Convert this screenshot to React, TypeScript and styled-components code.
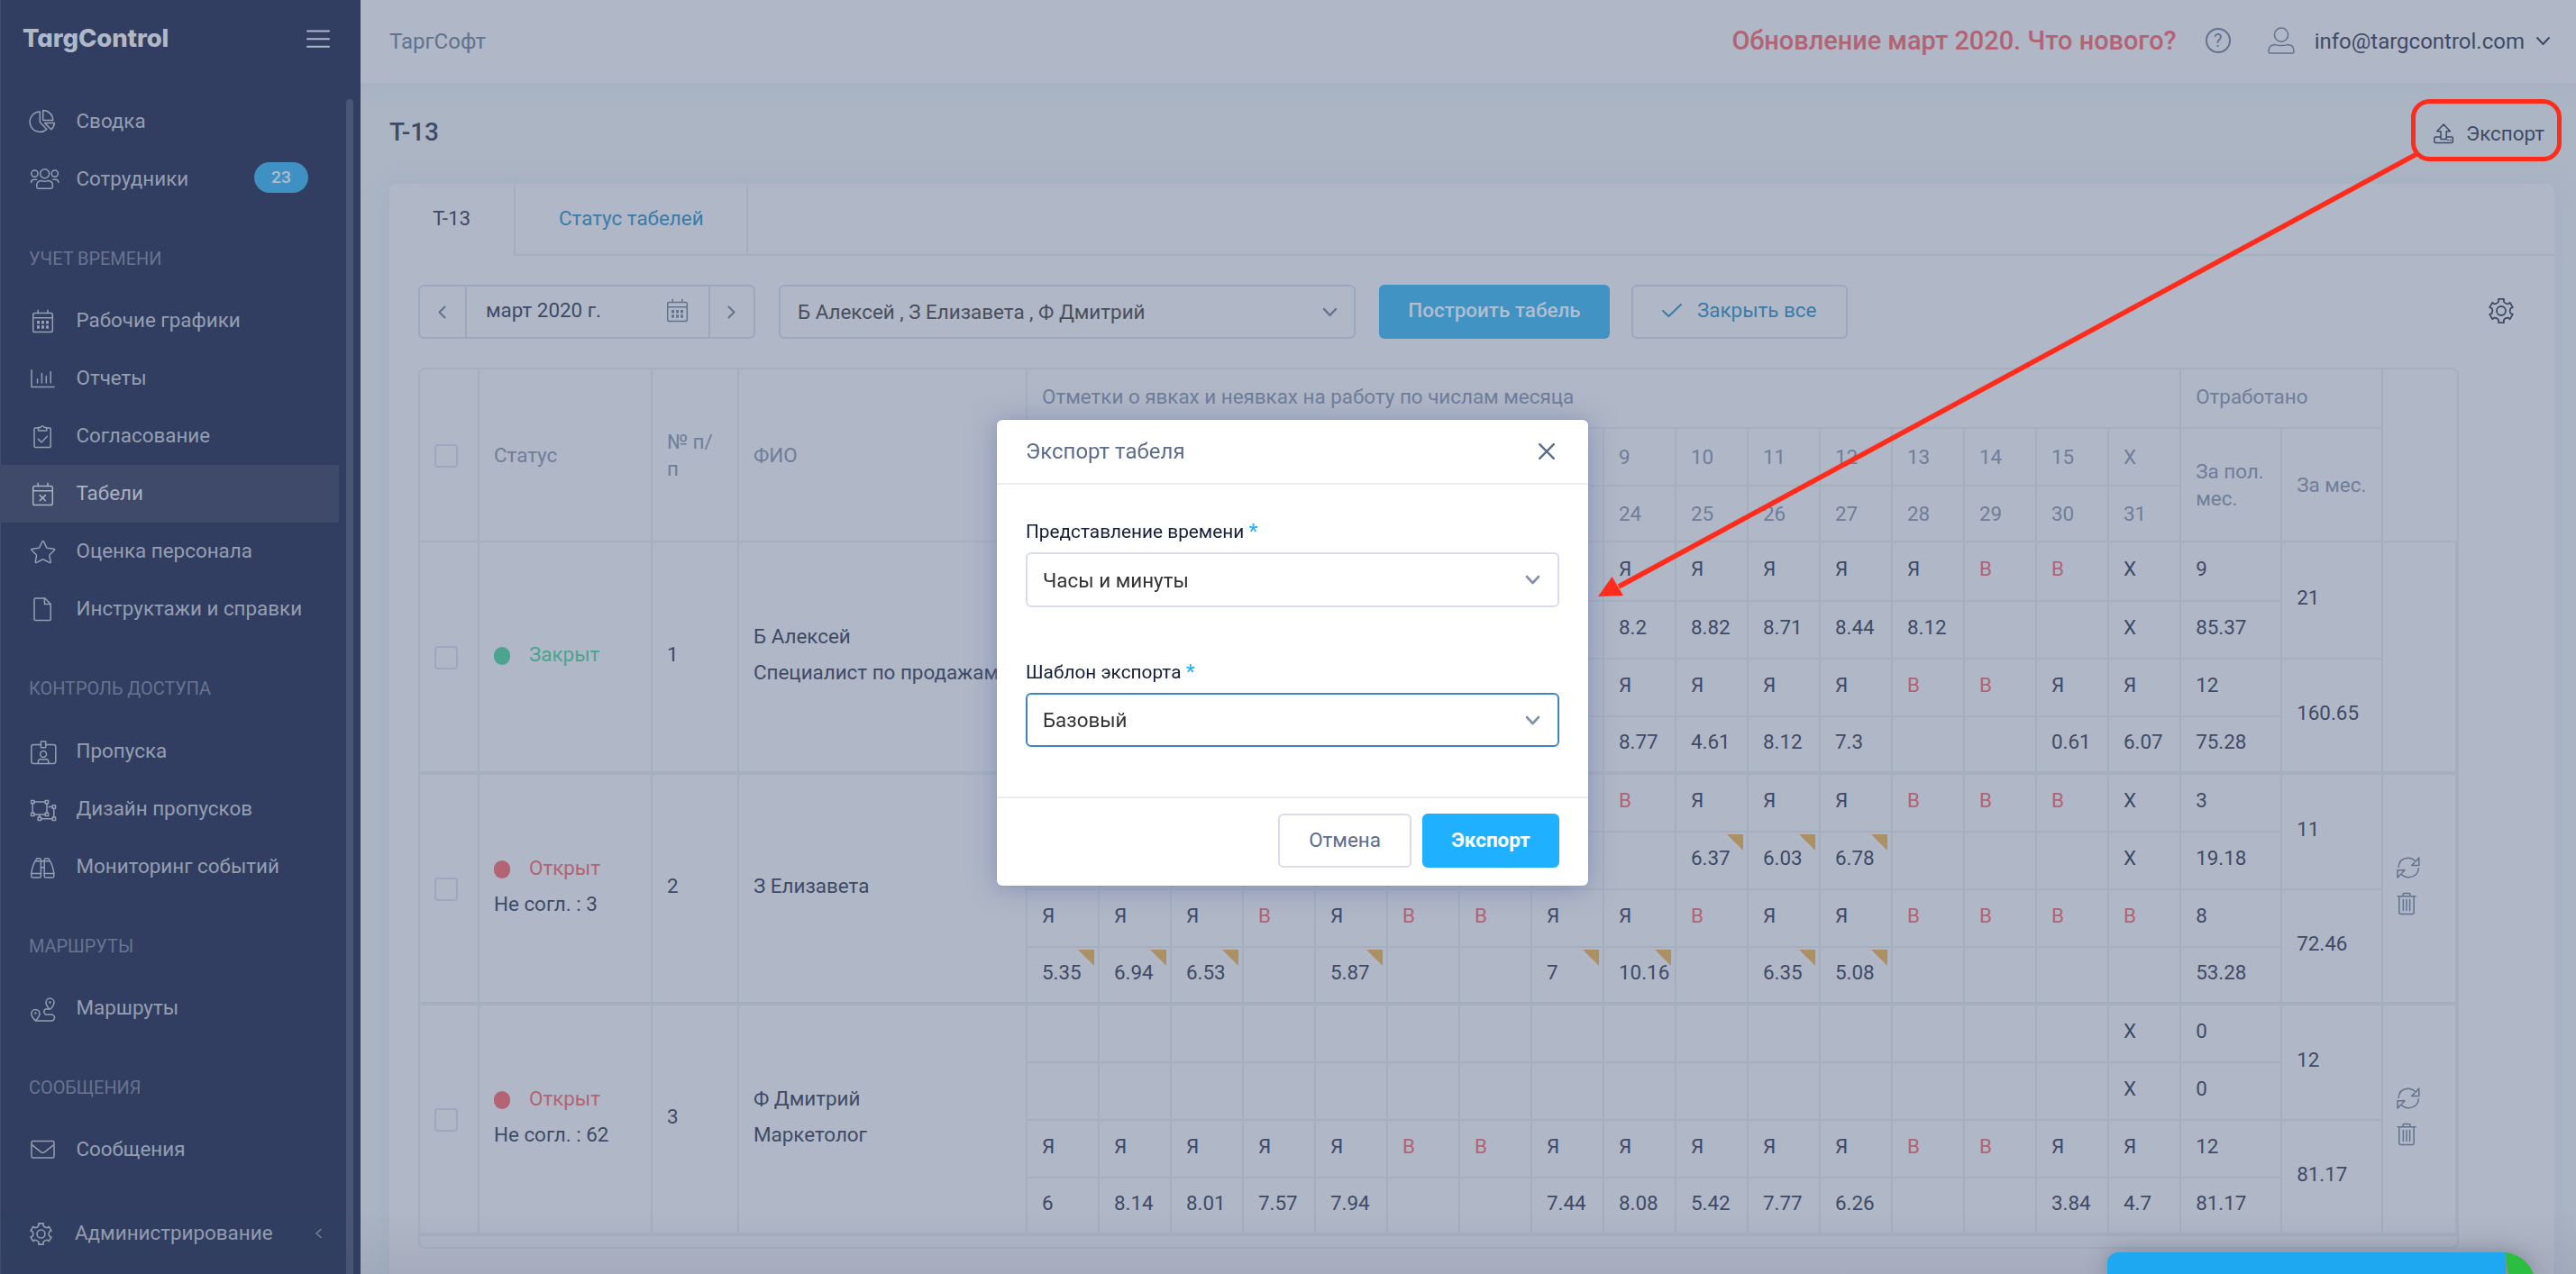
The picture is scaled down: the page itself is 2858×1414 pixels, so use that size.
import React from "react";
import styled, { createGlobalStyle, css } from "styled-components";

const colors = {
  page: "#abb5c4",
  card: "#b0b7c6",
  line: "#a5b0bf",
  control: "#9ba8bf",
  text: "#3f4b66",
  muted: "#6f7e9a",
  subtle: "#62738f",
  link: "#3a7ca8",
  danger: "#b26475",
  success: "#4ba48f",
  warning: "#ac9064",
  sidebar: "#313e61",
  sidebarActive: "#3f4969",
  sidebarText: "#959eb1",
  sidebarMuted: "#68748f",
  primary: "#1fb1ff",
  marker: "#ff2c1c",
};

const GlobalStyle = createGlobalStyle`
  * {
    box-sizing: border-box;
  }

  body {
    margin: 0;
    overflow: hidden;
    background: ${colors.page};
    color: ${colors.text};
    font-family: Roboto, "Liberation Sans", sans-serif;
    font-size: 22.4px;
    line-height: 30px;
  }
`;

/* ---------- icons ---------- */

const Svg = styled.svg`
  display: block;
  flex: none;
  fill: none;
  stroke: currentColor;
  stroke-width: 1.5;
  stroke-linejoin: round;
  stroke-linecap: round;
  overflow: visible;
`;

const gearPath = (r: number) => {
  const point = (radius: number, deg: number) => {
    const a = ((deg - 90) * Math.PI) / 180;
    return `${(14 + radius * Math.cos(a)).toFixed(2)} ${(14 + radius * Math.sin(a)).toFixed(2)}`;
  };
  const parts: string[] = [];
  for (let a = 0; a < 360; a += 60) {
    parts.push(
      `${a === 0 ? "M" : "L"}${point(r * 0.8, a - 15)}`,
      `L${point(r, a - 13)}`,
      `L${point(r, a + 13)}`,
      `L${point(r * 0.8, a + 15)}`,
      `Q${point(r * 0.66, a + 30)} ${point(r * 0.8, a + 45)}`
    );
  }
  return `${parts.join("")}Z`;
};

const GearIcon = ({ size = 28 }: { size?: number }) => (
  <Svg width={size} height={size} viewBox="0 0 28 28">
    <path d={gearPath(13.4)} style={{ strokeWidth: 1.8 }} />
    <circle cx="14" cy="14" r="5" style={{ strokeWidth: 1.8 }} />
  </Svg>
);

const calendarFrame = (
  <>
    <rect x="3.7" y="5.6" width="21.6" height="21" rx="1.8" />
    <path d="M3.7 10.7H25.3M9.2 2.2V5.4M20 2.2V5.4" />
  </>
);

const CalendarIcon = () => (
  <Svg width="34" height="28" viewBox="0 0 34 28">
    {calendarFrame}
    <path
      d="M8 14h3v3.4H8zM13 14h3v3.4h-3zM18 14h3v3.4h-3zM8 19.3h3v3.4H8zM13 19.3h3v3.4h-3zM18 19.3h3v3.4h-3z"
      fill="currentColor"
      stroke="none"
    />
  </Svg>
);

const navIcons: Record<string, React.ReactNode> = {
  pie: (
    <>
      <path d="M11.3 3A11.2 11.2 0 1 0 18.8 22.6L11.3 14.6Z" />
      <path d="M14.7 1.4V12.4H25.7A11 11 0 0 0 14.7 1.4Z" />
      <path d="M16.6 15.6H27.4A11 11 0 0 1 23.8 22.8Z" />
    </>
  ),
  people: (
    <>
      <circle cx="16.6" cy="7.7" r="5" />
      <circle cx="5.4" cy="7.6" r="3.6" />
      <circle cx="27.8" cy="7.6" r="3.6" />
      <path d="M7.8 22.6V21Q7.8 15.6 13.2 15.6Q16.6 16.8 20 15.6Q25.4 15.6 25.4 21V22.6Q25.4 24.2 23.8 24.2H9.4Q7.8 24.2 7.8 22.6Z" />
      <path d="M1.6 17.6Q1.6 14.2 5 14.2H7.6M31.8 17.6Q31.8 14.2 28.4 14.2H25.8" />
    </>
  ),
  chart: <path d="M2 4.8V23.4H27M8.5 14.7V19M13.4 8.6V19M18.3 11.4V19M23.2 6.6V19" />,
  clipboard: (
    <>
      <path d="M9.5 5H6.2Q5 5 5 6.2V25.2Q5 26.4 6.2 26.4H22Q23.2 26.4 23.2 25.2V6.2Q23.2 5 22 5H18.7" />
      <path d="M9.5 8V4.6H12A2.2 2.2 0 0 1 16.2 4.6H18.7V8Z" />
      <path d="M9.4 17.4L13 21L19.4 14.2" />
    </>
  ),
  calendarX: (
    <>
      {calendarFrame}
      <path d="M11.2 15.6L17.4 21.8M17.4 15.6L11.2 21.8" />
    </>
  ),
  star: (
    <path d="M13.8 3.2Q14.7 1.8 15.6 3.2L18.6 9.6Q18.9 10.1 19.5 10.2L26.7 11.2Q28.2 11.6 27.2 12.8L22.2 17.8Q21.8 18.2 21.9 18.8L23.2 25.6Q23.2 27 21.9 26.4L15.3 23Q14.7 22.7 14.1 23L7.5 26.4Q6.2 27 6.3 25.6L7.5 18.8Q7.6 18.2 7.2 17.8L2.2 12.8Q1.2 11.6 2.7 11.2L9.9 10.2Q10.5 10.1 10.8 9.6Z" />
  ),
  file: (
    <>
      <path d="M6.4 2H17L23.2 8.4V25.2Q23.2 26.6 21.8 26.6H6.4Q5 26.6 5 25.2V3.4Q5 2 6.4 2Z" />
      <path d="M16.4 2.4V8.6H23" />
    </>
  ),
  pass: (
    <>
      <path d="M12.2 6.4H4.2Q1.8 6.4 1.8 8.8V25Q1.8 27.4 4.2 27.4H26.4Q28.8 27.4 28.8 25V8.8Q28.8 6.4 26.4 6.4H18" />
      <rect x="12.4" y="2.8" width="5.4" height="7" rx=".8" />
      <circle cx="15.1" cy="17" r="3.4" />
      <path d="M9.4 27.2V25.6Q9.4 22.6 12.8 22.6Q15 23.6 17.4 22.6Q20.8 22.6 20.8 25.6V27.2" />
    </>
  ),
  design: (
    <>
      <path d="M5 6H17.2M5 20H17.2M3.2 8V18M19 8V18M21 11.4H25M26.8 13.2V23M13 24.8H25M10.8 20.4V23" />
      <path d="M1.6 4.4H5V7.8H1.6zM17.2 4.4H20.6V7.8H17.2zM1.6 18.2H5V21.6H1.6zM17.2 18.2H20.6V21.6H17.2zM25.2 9.8H28.6V13.2H25.2zM25.2 23H28.6V26.4H25.2zM9.2 23H12.6V26.4H9.2z" />
    </>
  ),
  binoculars: (
    <>
      <path d="M7 6.6Q7 4.8 8.4 4.8H11Q12.4 4.8 12.4 6.6V24.4Q12.4 26 10.8 26H3.4Q1.8 26 1.8 24.4V20.6Q3.8 10 7 6.6Z" />
      <path d="M16.2 6.6Q16.2 4.8 17.6 4.8H20.2Q21.6 4.8 21.6 6.6Q24.8 10 26.8 20.6V24.4Q26.8 26 25.2 26H17.8Q16.2 26 16.2 24.4Z" />
      <path d="M1.8 21.4H12.4M16.2 21.4H26.8M7 7.8H21.6M12.4 14.8H16.2" />
    </>
  ),
  route: (
    <>
      <path d="M5.4 27Q1.8 23 1.8 20A4.6 4.6 0 0 1 11 20Q11 23 7.2 27Z" />
      <path d="M21.8 15Q18 11 18 7.6A4.5 4.5 0 0 1 27 7.6Q27 11 23 15Z" />
      <path d="M21.4 15H17.6A3.4 3.4 0 0 0 17.6 21H24A3.4 3.4 0 0 1 24 28H6.4" />
      <circle cx="6.4" cy="19.6" r=".5" />
      <circle cx="22.5" cy="7.4" r=".5" />
    </>
  ),
  mail: (
    <>
      <rect x="2" y="4.6" width="25" height="18.4" rx="1.6" />
      <path d="M2.4 8.6L12.4 16.6Q14.5 18.4 16.6 16.6L26.6 8.6" />
    </>
  ),
};

const NavIcon = ({ name }: { name: string }) =>
  name === "calendar" ? (
    <CalendarIcon />
  ) : (
    <Svg width="34" height="28" viewBox="0 0 34 28">
      {navIcons[name]}
    </Svg>
  );

const Chevron = ({ w, h, stroke = 2 }: { w: number; h: number; stroke?: number }) => (
  <Svg width={w} height={h} viewBox={`0 0 ${w} ${h}`} strokeLinecap="butt">
    <path d={`M1 1L${w / 2} ${h - 1}L${w - 1} 1`} style={{ strokeWidth: stroke }} />
  </Svg>
);

const SideChevron = ({ right }: { right?: boolean }) => (
  <Svg width="9" height="13" viewBox="0 0 9 13">
    <path d={right ? "M1.5 0.5L7.5 6.5L1.5 12.5" : "M7.5 0.5L1.5 6.5L7.5 12.5"} style={{ strokeWidth: 2 }} />
  </Svg>
);

/* ---------- sidebar ---------- */

const Layout = styled.div`
  display: flex;
  width: 2858px;
  height: 1414px;
  overflow: hidden;
`;

const Sidebar = styled.aside`
  position: relative;
  z-index: 1;
  display: flex;
  flex-direction: column;
  flex: none;
  width: 400px;
  height: 100%;
  background: ${colors.sidebar};
  box-shadow: inset 1px 0 0 #414e70;
  color: ${colors.sidebarText};
`;

const Brand = styled.div`
  display: flex;
  align-items: center;
  justify-content: space-between;
  height: 103px;
  padding: 0 35px 17px 25px;
  color: #b0b7c6;
`;

const Logo = styled.span`
  padding-bottom: 2px;
  font-family: Inter, "Open Sans", sans-serif;
  font-size: 27.5px;
  font-weight: 800;
  font-feature-settings: "cv11";
  letter-spacing: -0.1px;
`;

const SidebarBody = styled.div`
  display: flex;
  justify-content: space-between;
  flex: 1;
  min-height: 0;
`;

const Nav = styled.nav`
  display: flex;
  flex-direction: column;
  width: 376px;
`;

const NavItem = styled.a<{ $active?: boolean }>`
  display: flex;
  align-items: center;
  flex: none;
  height: 64px;
  padding: 0 34px 0 33px;
  background: ${({ $active }) => ($active ? colors.sidebarActive : "transparent")};
  color: ${({ $active }) => ($active ? "#a8b1c2" : "inherit")};
`;

const NavLabel = styled.span`
  flex: 1;
  margin-left: 17.5px;
  padding-bottom: 2px;
  white-space: nowrap;
`;

const Badge = styled.span`
  display: flex;
  align-items: center;
  justify-content: center;
  width: 60px;
  height: 34px;
  margin-top: -4px;
  border-radius: 17px;
  background: #4091c3;
  color: #b3bccb;
  font-size: 19.2px;
  font-weight: 500;
`;

const NavSection = styled.div`
  display: flex;
  align-items: center;
  flex: none;
  height: 93.3px;
  padding: 21px 0 0 32px;
  color: ${colors.sidebarMuted};
  font-size: 19.9px;
`;

const NavFooter = styled(NavItem)`
  margin-top: auto;
  margin-bottom: 13px;
  padding: 0 19px 0 33px;

  ${NavLabel} {
    margin-left: 25px;
  }
`;

const Scrollbar = styled.div`
  width: 8px;
  margin: 7px 8px 0 0;
  border-radius: 4px 4px 0 0;
  background: #4b5675;
`;

type NavEntry = { section?: string; label?: string; icon?: string; badge?: number; active?: boolean };

const navEntries: NavEntry[] = [
  { label: "Сводка", icon: "pie" },
  { label: "Сотрудники", icon: "people", badge: 23 },
  { section: "УЧЕТ ВРЕМЕНИ" },
  { label: "Рабочие графики", icon: "calendar" },
  { label: "Отчеты", icon: "chart" },
  { label: "Согласование", icon: "clipboard" },
  { label: "Табели", icon: "calendarX", active: true },
  { label: "Оценка персонала", icon: "star" },
  { label: "Инструктажи и справки", icon: "file" },
  { section: "КОНТРОЛЬ ДОСТУПА" },
  { label: "Пропуска", icon: "pass" },
  { label: "Дизайн пропусков", icon: "design" },
  { label: "Мониторинг событий", icon: "binoculars" },
  { section: "МАРШРУТЫ" },
  { label: "Маршруты", icon: "route" },
  { section: "СООБЩЕНИЯ" },
  { label: "Сообщения", icon: "mail" },
];

/* ---------- page ---------- */

const Main = styled.main`
  display: flex;
  flex-direction: column;
  flex: 1;
  min-width: 0;
`;

const TopBar = styled.header`
  display: flex;
  align-items: center;
  flex: none;
  height: 92px;
  padding: 0 29px 2px 32px;
  background: ${colors.card};
  box-shadow: 0 0 24px rgba(150, 163, 185, 0.35);
`;

const Company = styled.span`
  flex: 1;
  padding-top: 2px;
  color: ${colors.subtle};
  font-size: 24px;
`;

const News = styled.a`
  margin-right: 32px;
  color: ${colors.danger};
  font-size: 28.9px;
  font-weight: 500;
`;

const HelpMark = styled.span`
  display: flex;
  align-items: center;
  justify-content: center;
  width: 28px;
  height: 28px;
  margin-right: 41px;
  border: 2px solid ${colors.subtle};
  border-radius: 50%;
  color: ${colors.subtle};
  font-size: 20px;
`;

const Account = styled.div`
  display: flex;
  align-items: center;
`;

const AccountIcon = styled.span`
  margin-right: 22px;
  color: ${colors.subtle};
`;

const Email = styled.span`
  margin: 2px 13px 0 0;
  font-size: 24px;
`;

const PageHead = styled.div`
  display: flex;
  align-items: center;
  justify-content: space-between;
  flex: none;
  height: 112px;
  padding: 0 35px 0 32px;
`;

const Title = styled.h1`
  margin: 0;
  padding-bottom: 3px;
  font-size: 28px;
  font-weight: 500;
`;

const ExportLink = styled.a`
  display: flex;
  align-items: center;
  gap: 14px;
`;

const Card = styled.section`
  flex: none;
  width: 2402px;
  height: 1300px;
  margin-left: 32px;
  border-radius: 8px;
  background: ${colors.card};
  box-shadow: 0 0 26px rgba(150, 163, 185, 0.35);
`;

const Tabs = styled.div`
  display: flex;
  height: 80px;
`;

const Tab = styled.div<{ $active?: boolean }>`
  display: flex;
  align-items: center;
  padding: 0 48px;
  border-right: 2px solid ${colors.line};
  white-space: nowrap;
  ${({ $active }) =>
    $active
      ? css`
          width: 140px;
          padding-bottom: 4px;
        `
      : css`
          width: 258px;
          padding-bottom: 2px;
          border-bottom: 2px solid ${colors.line};
          color: ${colors.link};
        `}
`;

const TabsRest = styled.div`
  flex: 1;
  border-bottom: 2px solid ${colors.line};
`;

const Filters = styled.div`
  display: flex;
  height: 60px;
  margin: 32px 45px 32px 32px;
`;

const MonthPicker = styled.div`
  display: flex;
  width: 374px;
  border: 2px solid ${colors.control};
  border-radius: 6px;
  color: ${colors.subtle};
`;

const MonthStep = styled.button`
  display: flex;
  align-items: center;
  justify-content: center;
  width: 50px;
  padding: 0 1px 0 0;
  border: 0;
  background: none;
  color: inherit;

  &:last-child {
    width: 48px;
  }
`;

const MonthField = styled.div`
  display: flex;
  align-items: center;
  justify-content: space-between;
  flex: 1;
  padding: 0 15px 4px 21px;
  border: solid ${colors.control};
  border-width: 0 2px;
`;

const MonthName = styled.span`
  color: ${colors.text};
`;

const Select = styled.div`
  display: flex;
  align-items: center;
  justify-content: space-between;
  width: 640px;
  margin: 0 26px;
  padding: 0 19px;
  border: 2px solid ${colors.control};
  border-radius: 6px;
  color: #4a4f5c;

  svg {
    color: ${colors.subtle};
  }
`;

const BuildButton = styled.button`
  width: 256px;
  padding: 0 0 4px;
  border: 0;
  border-radius: 6px;
  background: #4193c4;
  color: #b0bfd0;
  font: 500 22.4px/30px Roboto, sans-serif;
`;

const CloseAllButton = styled.button`
  display: flex;
  align-items: center;
  gap: 17px;
  width: 240px;
  margin-left: 24px;
  padding: 0 0 4px 32px;
  border: 2px solid ${colors.control};
  border-radius: 6px;
  background: none;
  color: ${colors.link};
  font: 400 22.4px/30px Roboto, sans-serif;
`;

const Settings = styled.div`
  display: flex;
  align-items: center;
  margin-left: auto;
  padding-bottom: 2px;
`;

/* ---------- timesheet ---------- */

const Sheet = styled.div`
  width: 2264px;
  height: 978px;
  margin-left: 32px;
  border: 2px solid ${colors.line};
  border-radius: 8px;
`;

const Table = styled.table`
  table-layout: fixed;
  width: 2260px;
  border-collapse: separate;
  border-spacing: 0;
`;

const Row = styled.tr<{ $height: number }>`
  height: ${({ $height }) => $height}px;
`;

const HeadCell = styled.th`
  padding: 0 16px 1px;
  border-right: 2px solid ${colors.line};
  border-bottom: 2px solid ${colors.line};
  color: ${colors.muted};
  font-weight: 400;
  text-align: left;

  &:last-child {
    border-right-color: ${({ rowSpan }) => (rowSpan === 3 ? "transparent" : colors.line)};
  }
`;

const GroupHead = styled(HeadCell)`
  padding-bottom: 5px;
`;

const Cell = styled.td<{ $last?: boolean; $off?: boolean }>`
  position: relative;
  padding: 0 0 6px 16px;
  border-right: 2px solid ${colors.line};
  border-bottom: ${({ $last }) => ($last ? 4 : 2)}px solid ${colors.line};
  color: ${({ $off }) => ($off ? colors.danger : "inherit")};
  white-space: nowrap;
`;

const CheckCell = styled(Cell)`
  padding-bottom: 0;
`;

const Flag = styled.i`
  position: absolute;
  top: 2px;
  right: 4px;
  width: 18px;
  height: 18px;
  background: ${colors.warning};
  clip-path: polygon(0 0, 100% 0, 100% 100%);
`;

const Checkbox = styled.span`
  display: block;
  width: 26px;
  height: 26px;
  margin-top: 2px;
  border: 2px solid ${colors.control};
  border-radius: 4px;
`;

const Line = styled.div`
  display: flex;
  align-items: center;
  height: 40px;
`;

const Status = styled(Line)<{ $open: boolean }>`
  gap: 21px;
  color: ${({ $open }) => ($open ? colors.danger : colors.success)};

  &::before {
    content: "";
    width: 18px;
    height: 20px;
    margin-top: 4px;
    border-radius: 9px;
    background: currentColor;
  }
`;

const Actions = styled.div`
  display: flex;
  flex-direction: column;
  gap: 16px;
  margin: -1px 0 0 -1px;
  color: ${colors.subtle};
`;

type Person = {
  open: boolean;
  pending?: number;
  name: string;
  position?: string;
  // 16 day marks per line, "*" flags an uncoordinated value
  lines: string[][];
  totals: string[];
  month: string[];
};

const firstWeek = Array(8).fill("");

const people: Person[] = [
  {
    open: false,
    name: "Б Алексей",
    position: "Специалист по продажам",
    lines: [
      [...firstWeek, "Я", "Я", "Я", "Я", "Я", "В", "В", "X"],
      [...firstWeek, "8.2", "8.82", "8.71", "8.44", "8.12", "", "", "X"],
      [...firstWeek, "Я", "Я", "Я", "Я", "В", "В", "Я", "Я"],
      [...firstWeek, "8.77", "4.61", "8.12", "7.3", "", "", "0.61", "6.07"],
    ],
    totals: ["9", "85.37", "12", "75.28"],
    month: ["21", "160.65"],
  },
  {
    open: true,
    pending: 3,
    name: "З Елизавета",
    lines: [
      [...firstWeek, "В", "Я", "Я", "Я", "В", "В", "В", "X"],
      [...firstWeek, "", "6.37*", "6.03*", "6.78*", "", "", "", "X"],
      ["Я", "Я", "Я", "В", "Я", "В", "В", "Я", "Я", "В", "Я", "Я", "В", "В", "В", "В"],
      ["5.35*", "6.94*", "6.53*", "", "5.87*", "", "", "7*", "10.16*", "", "6.35*", "5.08*", "", "", "", ""],
    ],
    totals: ["3", "19.18", "8", "53.28"],
    month: ["11", "72.46"],
  },
  {
    open: true,
    pending: 62,
    name: "Ф Дмитрий",
    position: "Маркетолог",
    lines: [
      [...firstWeek, "", "", "", "", "", "", "", "X"],
      [...firstWeek, "", "", "", "", "", "", "", "X"],
      ["Я", "Я", "Я", "Я", "Я", "В", "В", "Я", "Я", "Я", "Я", "Я", "В", "В", "Я", "Я"],
      ["6", "8.14", "8.01", "7.57", "7.94", "", "", "7.44", "8.08", "5.42", "7.77", "6.26", "", "", "3.84", "4.7"],
    ],
    totals: ["0", "0", "12", "81.17"],
    month: ["12", "81.17"],
  },
];

const columnWidths = [66, 192, 96, 320, ...Array(16).fill(80), 112, 112, 82];
const firstHalf = [...firstWeek, "9", "10", "11", "12", "13", "14", "15", "X"];
const secondHalf = [...firstWeek, "24", "25", "26", "27", "28", "29", "30", "31"];

const RowActions = () => (
  <Actions>
    <Svg width="26" height="24" viewBox="0 0 26 24">
      <path d="M2.2 11.4Q2.6 1.8 12.4 1.2Q17.6 1 21 5.2L24.8 1V9.4H16.8L19.6 6.6" />
      <path d="M24.4 12.8Q23.6 22 13.6 22.8Q8.4 23 5 18.8L1 23V14.8H9L6.4 17.4" />
    </Svg>
    <Svg width="22" height="24" viewBox="0 0 22 24">
      <path d="M1 3.8H21M2.8 4V22Q2.8 23.4 4.2 23.4H17.8Q19.2 23.4 19.2 22V4M7 3.6V2Q7 .6 8.4 .6H13.6Q15 .6 15 2V3.6M7.4 7.6V19.6M11 7.6V19.6M14.6 7.6V19.6" />
    </Svg>
  </Actions>
);

const Timesheet = () => (
  <Sheet>
    <Table>
      <colgroup>
        {columnWidths.map((width, i) => (
          <col key={i} style={{ width }} />
        ))}
      </colgroup>
      <thead>
        <Row $height={66}>
          <HeadCell rowSpan={3}>
            <Checkbox />
          </HeadCell>
          <HeadCell rowSpan={3}>Статус</HeadCell>
          <HeadCell rowSpan={3}>№ п/п</HeadCell>
          <HeadCell rowSpan={3}>ФИО</HeadCell>
          <GroupHead colSpan={16}>Отметки о явках и неявках на работу по числам месяца</GroupHead>
          <GroupHead colSpan={2}>Отработано</GroupHead>
          <HeadCell rowSpan={3} />
        </Row>
        <Row $height={64}>
          {firstHalf.map((day, i) => (
            <HeadCell key={i}>{day}</HeadCell>
          ))}
          <HeadCell rowSpan={2}>За пол. мес.</HeadCell>
          <HeadCell rowSpan={2}>За мес.</HeadCell>
        </Row>
        <Row $height={62}>
          {secondHalf.map((day, i) => (
            <HeadCell key={i}>{day}</HeadCell>
          ))}
        </Row>
      </thead>
      {people.map((person, index) => (
        <tbody key={person.name}>
          {person.lines.map((marks, line) => (
            <Row key={line} $height={index === 0 && line === 0 ? 66 : 64}>
              {line === 0 && (
                <>
                  <CheckCell rowSpan={4} $last>
                    <Checkbox />
                  </CheckCell>
                  <Cell rowSpan={4} $last>
                    <Status $open={person.open}>{person.open ? "Открыт" : "Закрыт"}</Status>
                    {person.pending && <Line>Не согл. : {person.pending}</Line>}
                  </Cell>
                  <Cell rowSpan={4} $last>
                    {index + 1}
                  </Cell>
                  <Cell rowSpan={4} $last>
                    <Line>{person.name}</Line>
                    {person.position && <Line>{person.position}</Line>}
                  </Cell>
                </>
              )}
              {marks.map((mark, i) => (
                <Cell key={i} $last={line === 3} $off={mark === "В"}>
                  {mark.replace("*", "")}
                  {mark.endsWith("*") && <Flag />}
                </Cell>
              ))}
              <Cell $last={line === 3}>{person.totals[line]}</Cell>
              {line % 2 === 0 && (
                <Cell rowSpan={2} $last={line === 2}>
                  {person.month[line / 2]}
                </Cell>
              )}
              {line === 0 && (
                <Cell rowSpan={4} $last>
                  {person.open && <RowActions />}
                </Cell>
              )}
            </Row>
          ))}
        </tbody>
      ))}
    </Table>
  </Sheet>
);

/* ---------- dialog ---------- */

const Overlay = styled.div`
  position: fixed;
  inset: 0;
  display: flex;
  align-items: flex-start;
  justify-content: center;
  padding: 466px 0 0 10px;
`;

const Dialog = styled.div`
  width: 656px;
  height: 517px;
  border-radius: 6px;
  background: #fff;
  box-shadow: 0 2px 30px rgba(85, 105, 170, 0.5), 0 0 2px rgba(120, 135, 180, 0.6);
  color: #161f38;
`;

const DialogHead = styled.div`
  display: flex;
  align-items: center;
  justify-content: space-between;
  height: 72px;
  padding: 0 37px 0 32px;
  border-bottom: 2px solid #ebedf2;
  color: #5d6d8c;
  font-size: 24px;
`;

const DialogBody = styled.div`
  height: 348px;
  padding: 36px 32px 0;
  border-bottom: 2px solid #ebedf2;
`;

const Field = styled.div`
  margin-bottom: 56px;
`;

const FieldLabel = styled.div`
  height: 30px;
  margin-bottom: 9px;
  font-size: 20.8px;
`;

const Required = styled.span`
  color: ${colors.primary};
  font-size: 22.4px;
  font-weight: 500;
`;

const FieldSelect = styled.div<{ $focused?: boolean }>`
  display: flex;
  align-items: center;
  justify-content: space-between;
  height: ${({ $focused }) => ($focused ? 60 : 61)}px;
  padding: 0 20px 0 17px;
  border: 2px solid ${({ $focused }) => ($focused ? "#4285bd" : "#d9dcec")};
  border-radius: 6px;
  color: #333;

  svg {
    color: #8290ab;
  }
`;

const DialogFoot = styled.div`
  display: flex;
  justify-content: flex-end;
  gap: 12px;
  padding: 17px 32px 0;
`;

const Button = styled.button<{ $primary?: boolean }>`
  width: ${({ $primary }) => ($primary ? 152 : 148)}px;
  height: 60px;
  padding: 0 0 2px;
  border: 2px solid ${({ $primary }) => ($primary ? colors.primary : "#d9dcec")};
  border-radius: 6px;
  background: ${({ $primary }) => ($primary ? colors.primary : "#fff")};
  color: ${({ $primary }) => ($primary ? "#fff" : "#5d6d8c")};
  font: ${({ $primary }) => ($primary ? 700 : 400)} 22.4px/30px Roboto, sans-serif;
`;

const ExportDialog = () => (
  <Overlay>
    <Dialog>
      <DialogHead>
        Экспорт табеля
        <Svg width="18" height="18" viewBox="0 0 18 18">
          <path d="M1.2 1.2L16.8 16.8M16.8 1.2L1.2 16.8" style={{ strokeWidth: 2.4 }} />
        </Svg>
      </DialogHead>
      <DialogBody>
        <Field>
          <FieldLabel>
            Представление времени <Required>*</Required>
          </FieldLabel>
          <FieldSelect>
            Часы и минуты
            <Chevron w={15} h={9} stroke={2.6} />
          </FieldSelect>
        </Field>
        <Field>
          <FieldLabel>
            Шаблон экспорта <Required>*</Required>
          </FieldLabel>
          <FieldSelect $focused>
            Базовый
            <Chevron w={15} h={9} stroke={2.6} />
          </FieldSelect>
        </Field>
      </DialogBody>
      <DialogFoot>
        <Button>Отмена</Button>
        <Button $primary>Экспорт</Button>
      </DialogFoot>
    </Dialog>
  </Overlay>
);

/* ---------- things floating over the page ---------- */

const ChatTab = styled.div`
  position: fixed;
  right: 47px;
  bottom: 0;
  width: 473px;
  height: 24px;
  border-radius: 12px 0 0 0;
  background: linear-gradient(90deg, #1fa8f2 442px, transparent 442px);
  filter: drop-shadow(0 2px 12px rgba(50, 60, 80, 0.45));
`;

const ChatLeaf = styled.svg`
  display: block;
  margin-left: 442px;
`;

const BottomShade = styled.div`
  position: fixed;
  inset: auto 0 0 0;
  z-index: 1;
  height: 70px;
  background: linear-gradient(rgba(60, 70, 100, 0), rgba(60, 70, 100, 0.09));
`;

const Marker = styled.svg`
  position: fixed;
  top: 0;
  left: 0;
  z-index: 3;
  fill: none;
  stroke: ${colors.marker};
`;

const Floating = styled.div`
  position: relative;
  z-index: 2;
`;

const App: React.FC = () => (
  <>
    <GlobalStyle />
    <Layout>
      <Sidebar>
        <Brand>
          <Logo>TargControl</Logo>
          <Svg width="24" height="20" viewBox="0 0 24 20" strokeLinecap="butt">
            <path d="M0 1.5H24M0 10.2H24M0 18.8H24" style={{ strokeWidth: 2 }} />
          </Svg>
        </Brand>
        <SidebarBody>
          <Nav>
            {navEntries.map((entry) =>
              entry.section ? (
                <NavSection key={entry.section}>{entry.section}</NavSection>
              ) : (
                <NavItem key={entry.label} $active={entry.active}>
                  <NavIcon name={entry.icon ?? ""} />
                  <NavLabel>{entry.label}</NavLabel>
                  {entry.badge && <Badge>{entry.badge}</Badge>}
                </NavItem>
              )
            )}
            <NavFooter>
              <GearIcon size={25} />
              <NavLabel>Администрирование</NavLabel>
              <Svg width="8" height="12" viewBox="0 0 8 12" opacity="0.75">
                <path d="M7 1.5L2 6L7 10.5" />
              </Svg>
            </NavFooter>
          </Nav>
          <Scrollbar />
        </SidebarBody>
      </Sidebar>
      <Main>
        <TopBar>
          <Company>ТаргСофт</Company>
          <News>Обновление март 2020. Что нового?</News>
          <HelpMark>?</HelpMark>
          <Account>
            <AccountIcon>
              <Svg width="30" height="30" viewBox="0 0 30 30">
                <circle cx="15" cy="8.6" r="7.6" />
                <path d="M1 27.4V26.4Q1.4 19.6 8.4 19.6Q15 21.4 21.6 19.6Q28.6 19.6 29 26.4V27.4Q29 29 27.4 29H2.6Q1 29 1 27.4Z" />
              </Svg>
            </AccountIcon>
            <Email>info@targcontrol.com</Email>
            <Chevron w={15} h={9} />
          </Account>
        </TopBar>
        <PageHead>
          <Title>Т-13</Title>
          <ExportLink>
            <Svg width="22" height="22" viewBox="0 0 22 22">
              <path d="M7.6 15H2.4Q.8 15 .8 16.6V20Q.8 21.6 2.4 21.6H19.8Q21.4 21.6 21.4 20V16.6Q21.4 15 19.8 15H14.6" />
              <path d="M11.1 1L18.4 8.8H14.2V17.6H8V8.8H3.8Z" />
              <path d="M15.8 18.4h.4M18.6 18.4h.4" />
            </Svg>
            Экспорт
          </ExportLink>
        </PageHead>
        <Card>
          <Tabs>
            <Tab $active>Т-13</Tab>
            <Tab>Статус табелей</Tab>
            <TabsRest />
          </Tabs>
          <Filters>
            <MonthPicker>
              <MonthStep>
                <SideChevron />
              </MonthStep>
              <MonthField>
                <MonthName>март 2020 г.</MonthName>
                <CalendarIcon />
              </MonthField>
              <MonthStep>
                <SideChevron right />
              </MonthStep>
            </MonthPicker>
            <Select>
              Б Алексей , З Елизавета , Ф Дмитрий
              <Chevron w={15} h={9} stroke={2.4} />
            </Select>
            <BuildButton>Построить табель</BuildButton>
            <CloseAllButton>
              <Svg width="22" height="15" viewBox="0 0 22 15">
                <path d="M1 8L7.4 14L21 1" style={{ strokeWidth: 2 }} />
              </Svg>
              Закрыть все
            </CloseAllButton>
            <Settings>
              <GearIcon />
            </Settings>
          </Filters>
          <Timesheet />
        </Card>
      </Main>
    </Layout>
    <BottomShade />
    <Floating>
      <ChatTab>
        <ChatLeaf width="31" height="24" viewBox="0 0 31 24">
          <path d="M0 0Q22 3 31 24H3Q0 12 0 0Z" fill="#2cbe41" />
        </ChatLeaf>
      </ChatTab>
      <ExportDialog />
    </Floating>
    <Marker width="2858" height="1414" viewBox="0 0 2858 1414">
      <rect x="2677.5" y="112.5" width="162" height="64" rx="18" strokeWidth="5" />
      <path d="M2683 170L1796 651" strokeWidth="5.5" />
      <path d="M1773 662L1788.5 640L1801 661Z" fill={colors.marker} stroke="none" />
    </Marker>
  </>
);

export default App;
